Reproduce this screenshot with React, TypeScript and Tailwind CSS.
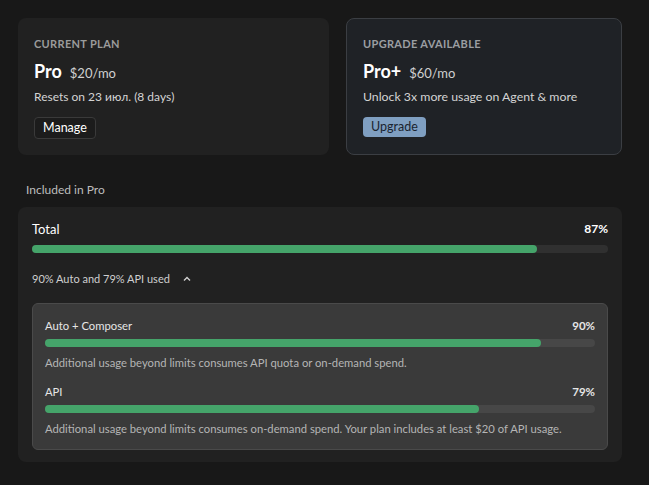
import React from 'react';

const font = { fontFamily: 'Lato, "Noto Sans", sans-serif' };

interface UsageBarProps {
  percent: number;
  track: string;
}

const UsageBar: React.FC<UsageBarProps> = ({ percent, track }) => (
  <div className={`h-2 w-full rounded-full ${track}`}>
    <div className="h-2 rounded-full bg-[#45a46a]" style={{ width: `${percent}%` }} />
  </div>
);

const App: React.FC = () => {
  return (
    <div className="min-h-[485px] w-full bg-[#181818] text-[#e6e6e6]" style={font}>
      <div className="ml-[18px] w-[604px] pt-[18px]">
        <div className="flex gap-[17px]">
          <div className="h-[137px] w-[311px] rounded-lg bg-[#212121] px-4 pt-[18px]">
            <div className="text-[11px] font-bold leading-[16px] tracking-[0.03em] text-[#9b9b9b]">CURRENT PLAN</div>
            <div className="mt-[6px] flex items-baseline gap-[8px]">
              <span className="text-[18px] font-bold leading-[26px] text-white">Pro</span>
              <span className="text-[13px] text-[#d0d0d0]">$20/mo</span>
            </div>
            <div className="mt-[4px] text-[12px] leading-[18px] text-[#d4d4d4]">Resets on 23 июл. (8 days)</div>
            <button className="mt-[11px] rounded-[4px] border border-[#3a3a3a] bg-[#1c1c1c] px-[8px] py-[1px] text-[12.5px] leading-[18px] text-white">
              Manage
            </button>
          </div>
          <div className="h-[137px] flex-1 rounded-lg border border-[#3b3e43] bg-[#1f2226] px-4 pt-[17px]">
            <div className="text-[11px] font-bold leading-[16px] tracking-[0.03em] text-[#9b9ea2]">UPGRADE AVAILABLE</div>
            <div className="mt-[6px] flex items-baseline gap-[8px]">
              <span className="text-[18px] font-bold leading-[26px] text-white">Pro+</span>
              <span className="text-[13px] text-[#d0d0d0]">$60/mo</span>
            </div>
            <div className="mt-[4px] text-[12.3px] leading-[18px] text-[#d4d4d4]">Unlock 3x more usage on Agent &amp; more</div>
            <button className="mt-[11px] rounded-[4px] bg-[#7f9fc1] px-[8px] py-[1px] text-[12.5px] leading-[18px] text-[#1a2430]">
              Upgrade
            </button>
          </div>
        </div>

        <div className="mt-[26px] pl-[8px] text-[12px] leading-[18px] text-[#bdbdbd]">Included in Pro</div>

        <div className="mt-[8px] rounded-lg bg-[#212121] px-[14px] pb-[12px] pt-[12px]">
          <div className="flex items-center justify-between">
            <span className="text-[13px] leading-[20px] text-white">Total</span>
            <span className="text-[12px] font-bold leading-[20px] text-white">87%</span>
          </div>
          <div className="mt-[6px]">
            <UsageBar percent={87.7} track="bg-[#303030]" />
          </div>
          <div className="mt-[17px] flex items-center gap-[12px] text-[11px] leading-[18px] text-[#cfcfcf]">
            <span>90% Auto and 79% API used</span>
            <svg width="10" height="10" viewBox="0 0 10 10" fill="none" stroke="#d0d0d0" strokeWidth="1.4">
              <path d="M2 6.5 L5 3.5 L8 6.5" />
            </svg>
          </div>

          <div className="mt-[15px] rounded-md border border-[#4a4a4a] bg-[#3a3a3a] px-[12px] pb-[12px] pt-[13px]">
            <div className="flex items-center justify-between">
              <span className="text-[11.25px] leading-[18px] text-[#e6e6e6]">Auto + Composer</span>
              <span className="text-[11.5px] font-bold leading-[18px] text-[#e6e6e6]">90%</span>
            </div>
            <div className="mt-[4px]">
              <UsageBar percent={90.2} track="bg-[#474747]" />
            </div>
            <div className="mt-[8px] text-[11.25px] leading-[16px] text-[#b5b5b5]">
              Additional usage beyond limits consumes API quota or on-demand spend.
            </div>

            <div className="mt-[12px] flex items-center justify-between">
              <span className="text-[11.25px] leading-[18px] text-[#e6e6e6]">API</span>
              <span className="text-[11.5px] font-bold leading-[18px] text-[#e6e6e6]">79%</span>
            </div>
            <div className="mt-[4px]">
              <UsageBar percent={78.9} track="bg-[#474747]" />
            </div>
            <div className="mt-[8px] text-[11.25px] leading-[16px] text-[#b5b5b5]">
              Additional usage beyond limits consumes on-demand spend. Your plan includes at least $20 of API usage.
            </div>
          </div>
        </div>
      </div>
    </div>
  );
};

export default App;
